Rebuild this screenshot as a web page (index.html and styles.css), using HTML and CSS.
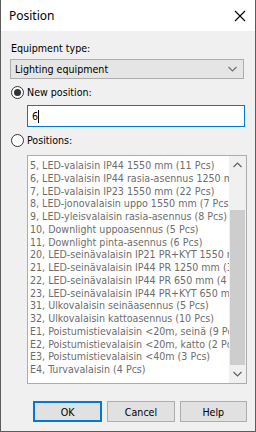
FILE: index.html
```html
<!DOCTYPE html>
<html lang="en">

<head>
    <meta charset="UTF-8">
    <meta name="viewport" content="width=device-width, initial-scale=1.0">
    <title>Position</title>
    <link rel="stylesheet" href="styles.css">
</head>

<body>
    <div class="window">
        <!-- 标题栏 -->
        <div class="titlebar">
            <span class="title">Position</span>
            <svg class="close" width="12" height="12" viewBox="0 0 12 12">
                <path d="M1 1 L11 11 M11 1 L1 11" stroke="#000" stroke-width="1.1" fill="none" />
            </svg>
        </div>
        <div class="content">
            <div class="label">Equipment type:</div>
            <div class="combo">
                <span>Lighting equipment</span>
                <svg width="9" height="6" viewBox="0 0 9 6">
                    <path d="M0.5 1 L4.5 5 L8.5 1" stroke="#707070" stroke-width="1.2" fill="none" />
                </svg>
            </div>
            <div class="radio-row">
                <span class="radio checked"></span>
                <span>New position:</span>
            </div>
            <div class="input">6<span class="caret"></span></div>
            <div class="radio-row">
                <span class="radio"></span>
                <span>Positions:</span>
            </div>
            <!-- 列表框，文字是灰色的（禁用状态） -->
            <div class="listbox">
                <ul class="items">
                    <li>5, LED-valaisin IP44 1550 mm (11 Pcs)</li>
                    <li>6, LED-valaisin IP44 rasia-asennus 1250 mm (2 Pcs)</li>
                    <li>7, LED-valaisin IP23 1550 mm (22 Pcs)</li>
                    <li>8, LED-jonovalaisin uppo 1550 mm (7 Pcs)</li>
                    <li>9, LED-yleisvalaisin rasia-asennus (8 Pcs)</li>
                    <li>10, Downlight uppoasennus (5 Pcs)</li>
                    <li>11, Downlight pinta-asennus (6 Pcs)</li>
                    <li>20, LED-seinävalaisin IP21 PR+KYT 1550 mm (2 Pcs)</li>
                    <li>21, LED-seinävalaisin IP44 PR 1250 mm (3 Pcs)</li>
                    <li>22, LED-seinävalaisin IP44 PR 650 mm (4 Pcs)</li>
                    <li>23, LED-seinävalaisin IP44 PR+KYT 650 mm (2 Pcs)</li>
                    <li>31, Ulkovalaisin seinäasennus (5 Pcs)</li>
                    <li>32, Ulkovalaisin kattoasennus (10 Pcs)</li>
                    <li>E1, Poistumistievalaisin &lt;20m, seinä (9 Pcs)</li>
                    <li>E2, Poistumistievalaisin &lt;20m, katto (2 Pcs)</li>
                    <li>E3, Poistumistievalaisin &lt;40m (3 Pcs)</li>
                    <li>E4, Turvavalaisin (4 Pcs)</li>
                </ul>
                <div class="scrollbar">
                    <svg width="9" height="6" viewBox="0 0 9 6">
                        <path d="M0.5 5 L4.5 1 L8.5 5" stroke="#606060" stroke-width="1.2" fill="none" />
                    </svg>
                    <div class="track">
                        <div class="thumb"></div>
                    </div>
                    <svg width="9" height="6" viewBox="0 0 9 6">
                        <path d="M0.5 1 L4.5 5 L8.5 1" stroke="#606060" stroke-width="1.2" fill="none" />
                    </svg>
                </div>
            </div>
            <div class="buttons">
                <div class="btn default">OK</div>
                <div class="btn">Cancel</div>
                <div class="btn">Help</div>
            </div>
        </div>
    </div>
</body>

</html>
```

FILE: styles.css
```css
* {
    margin: 0;
    padding: 0;
    box-sizing: border-box;
}

body {
    width: 256px;
    height: 432px;
    font-family: "DejaVu Sans Condensed", "DejaVu Sans", sans-serif;
    font-stretch: condensed;
    font-size: 10.6px;
    color: #000;
}
/* 窗口外框 */

.window {
    width: 256px;
    height: 432px;
    border: 1px solid #5c5c5c;
    border-top: none;
    background-color: #f0f0f0;
    display: flex;
    flex-direction: column;
}

.titlebar {
    height: 31px;
    background-color: #fff;
    display: flex;
    align-items: center;
    justify-content: space-between;
    padding: 0 9px 0 8px;
}

.title {
    font-family: "Noto Sans", sans-serif;
    font-stretch: normal;
    font-size: 12px;
}

.content {
    padding: 11px 10px 0 9px;
    display: flex;
    flex-direction: column;
}

.label {
    height: 17px;
    line-height: 13px;
    padding-left: 1px;
}

.combo {
    height: 20px;
    margin-right: 1px;
    border: 1px solid #adadad;
    background-color: #e5e5e5;
    display: flex;
    align-items: center;
    justify-content: space-between;
    padding: 0 6px 0 4px;
}

.radio-row {
    display: flex;
    align-items: center;
    gap: 3px;
    height: 16px;
    margin-top: 5px;
    padding-left: 1px;
}

.radio {
    width: 13px;
    height: 13px;
    border: 1px solid #333;
    border-radius: 50%;
    background-color: #fff;
    position: relative;
}
/* 选中的圆点 */

.radio.checked::after {
    content: '';
    position: absolute;
    top: 2px;
    left: 2px;
    width: 7px;
    height: 7px;
    border-radius: 50%;
    background-color: #333;
}

.input {
    height: 22px;
    margin: 5px 0 0 17px;
    border: 1px solid #0078d7;
    background-color: #fff;
    display: flex;
    align-items: center;
    padding-left: 4px;
}

.caret {
    width: 1px;
    height: 13px;
    background-color: #000;
}

.listbox {
    height: 229px;
    margin: 7px -2px 0 17px;
    border: 1px solid #adadad;
    background-color: #fff;
    display: flex;
    overflow: hidden;
}

.items {
    list-style: none;
    flex: 1;
    overflow: hidden;
    padding: 3px 0 0 2px;
    color: #6d6d6d;
}

.items li {
    height: 12.75px;
    line-height: 12.75px;
    white-space: nowrap;
}

.scrollbar {
    width: 17px;
    background-color: #f0f0f0;
    display: flex;
    flex-direction: column;
    align-items: center;
    padding: 0 1px;
}

.scrollbar svg {
    margin: 6px 0;
}

.track {
    flex: 1;
    width: 100%;
    display: flex;
    flex-direction: column;
    justify-content: flex-end;
}

.thumb {
    height: 155px;
    background-color: #cdcdcd;
}

.buttons {
    display: flex;
    gap: 5px;
    margin: 17px -2px 0 23px;
}

.btn {
    flex: 1;
    height: 21px;
    border: 1px solid #adadad;
    background-color: #e1e1e1;
    display: flex;
    align-items: center;
    justify-content: center;
}

.btn.default {
    border: 2px solid #0078d7;
}
```
